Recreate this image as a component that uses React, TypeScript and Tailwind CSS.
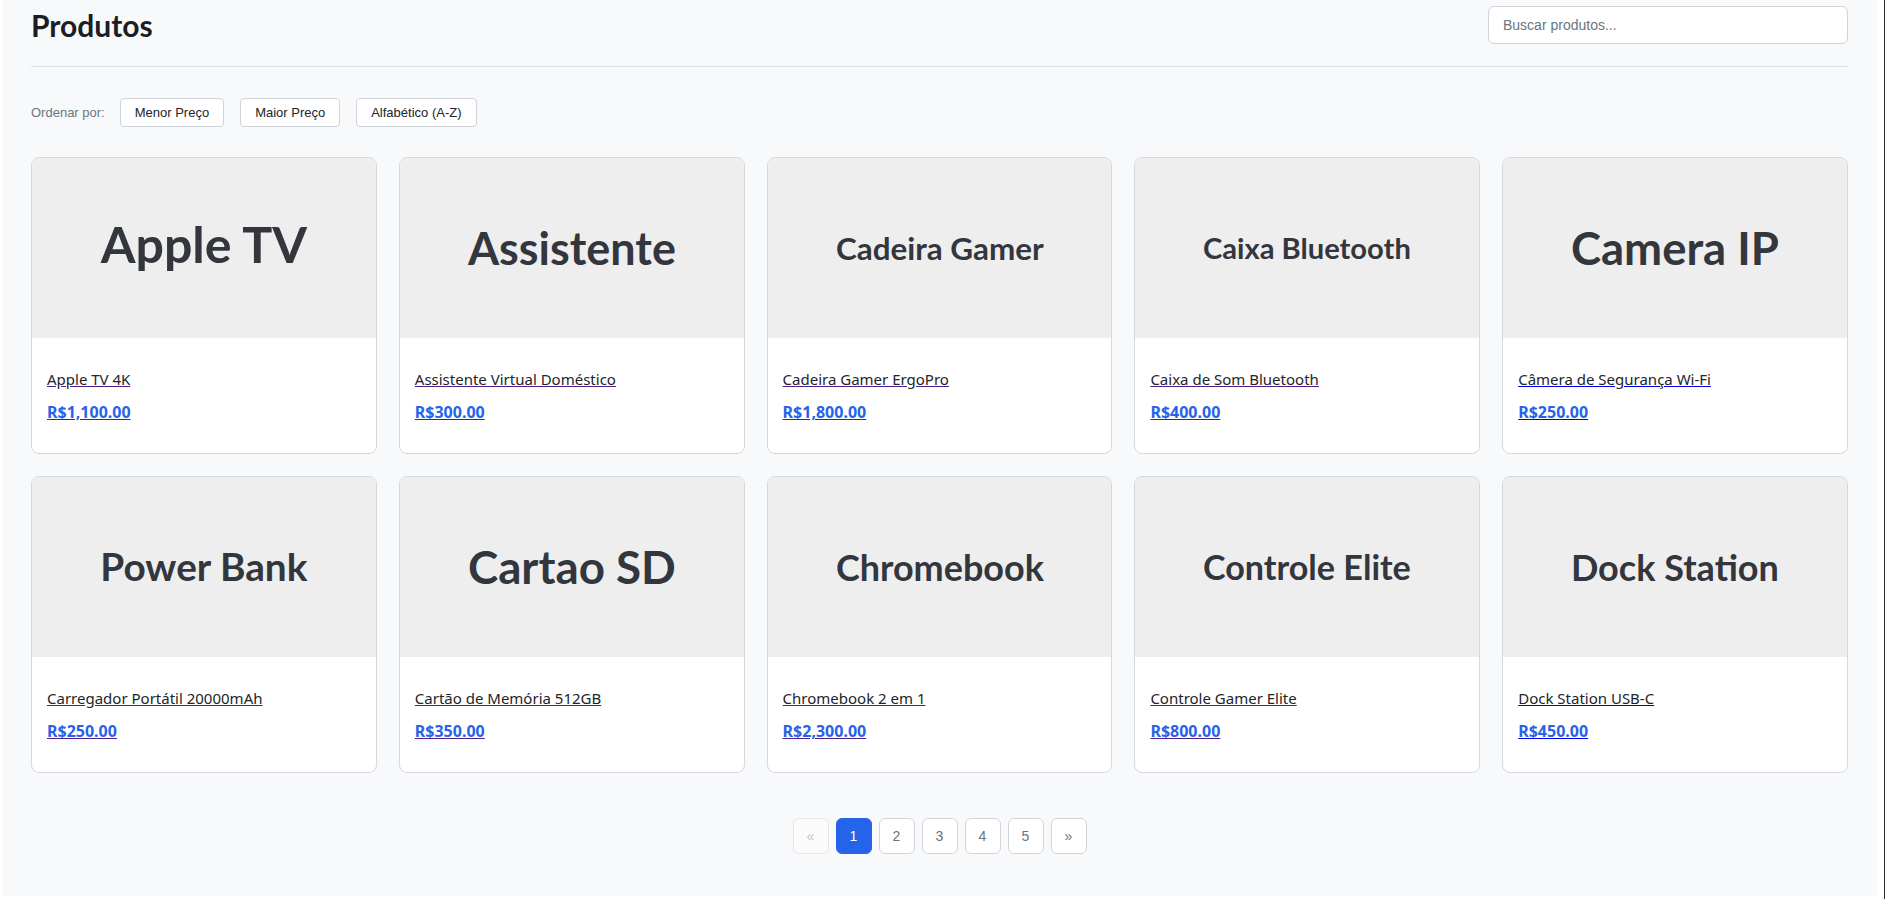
import React, { useLayoutEffect, useState } from "react";

type Produto = {
  label: string;
  nome: string;
  preco: string;
  visitado: boolean;
};

const produtos: Produto[] = [
  { label: "Apple TV", nome: "Apple TV 4K", preco: "R$1,100.00", visitado: true },
  { label: "Assistente", nome: "Assistente Virtual Doméstico", preco: "R$300.00", visitado: true },
  { label: "Cadeira Gamer", nome: "Cadeira Gamer ErgoPro", preco: "R$1,800.00", visitado: true },
  { label: "Caixa Bluetooth", nome: "Caixa de Som Bluetooth", preco: "R$400.00", visitado: true },
  { label: "Camera IP", nome: "Câmera de Segurança Wi-Fi", preco: "R$250.00", visitado: false },
  { label: "Power Bank", nome: "Carregador Portátil 20000mAh", preco: "R$250.00", visitado: true },
  { label: "Cartao SD", nome: "Cartão de Memória 512GB", preco: "R$350.00", visitado: true },
  { label: "Chromebook", nome: "Chromebook 2 em 1", preco: "R$2,300.00", visitado: true },
  { label: "Controle Elite", nome: "Controle Gamer Elite", preco: "R$800.00", visitado: true },
  { label: "Dock Station", nome: "Dock Station USB-C", preco: "R$450.00", visitado: false },
];

// imagem placeholder: texto ocupa ~208px e fica centrado pela caixa dos glifos
const Placeholder = ({ text }: { text: string }) => {
  const [m, setM] = useState({ size: 50, y: 108 });

  useLayoutEffect(() => {
    const medir = () => {
      const ctx = document.createElement("canvas").getContext("2d");
      if (!ctx) return;
      ctx.font = "700 50px Lato";
      const w = ctx.measureText(text).width;
      if (!w) return;
      const size = (50 * 208) / w;
      ctx.font = `700 ${size}px Lato`;
      const mm = ctx.measureText(text);
      const y = 90 + (mm.actualBoundingBoxAscent - mm.actualBoundingBoxDescent) / 2;
      setM({ size, y });
    };
    medir();
    document.fonts?.ready.then(medir);
  }, [text]);

  return (
    <svg width="100%" height="180" className="block bg-[#eeeeee]">
      <text
        x="50%"
        y={m.y}
        textAnchor="middle"
        fill="#33363d"
        fontFamily="Lato, sans-serif"
        fontWeight="700"
        fontSize={m.size}
      >
        {text}
      </text>
    </svg>
  );
};

const ProdutoCard = ({ p }: { p: Produto }) => {
  const deco = p.visitado ? "decoration-[#551a8b]" : "decoration-[#0000ee]";
  return (
    <a href="#" className="flex flex-col overflow-hidden rounded-[8px] border border-[#d5d8dc] bg-white">
      <Placeholder text={p.label} />
      <div className="px-[15px] pb-[29px] pt-[30px] [font-family:'Noto_Sans',sans-serif]">
        <div className={`text-[15px] leading-[22px] text-[#212529] underline ${deco}`}>
          <span>{p.nome}</span>
        </div>
        <div className={`mt-[10px] text-[16px] font-bold leading-6 text-[#2563eb] underline ${deco}`}>
          {p.preco}
        </div>
      </div>
    </a>
  );
};

const App = () => {
  const [busca, setBusca] = useState("");

  return (
    <div className="flex h-[899px] bg-white [font-family:'Liberation_Sans',Arial,sans-serif]">
      <div className="ml-[2px] h-[896px] w-[1875px] bg-[#f8f9fa] px-[29px]">
        <div className="flex items-center justify-between border-b border-[#dcdfe3] pb-[22px] pt-[6px]">
          <h1 className="text-[30px] font-bold leading-[34px] text-[#1b1e23] [font-family:Lato,sans-serif]">
            Produtos
          </h1>
          <input
            type="text"
            value={busca}
            onChange={(e) => setBusca(e.target.value)}
            placeholder="Buscar produtos..."
            className="h-[38px] w-[360px] rounded-[6px] border border-[#ced4da] bg-white px-[14px] text-[14px] text-[#212529] placeholder:text-[#6c757d] focus:outline-none"
          />
        </div>

        <div className="mt-[31px] flex items-center gap-[16px]">
          <span className="mr-[-1px] text-[13px] text-[#6c757d]">Ordenar por:</span>
          {["Menor Preço", "Maior Preço", "Alfabético (A-Z)"].map((label) => (
            <button
              key={label}
              className="h-[29px] rounded-[4px] border border-[#ced4da] bg-white px-[14px] text-[13px] text-[#212529]"
            >
              {label}
            </button>
          ))}
        </div>

        <div className="mt-[30px] grid grid-cols-5 gap-[22px]">
          {produtos.map((p) => (
            <ProdutoCard key={p.nome} p={p} />
          ))}
        </div>

        <div className="mt-[45px] flex justify-center gap-[7px]">
          <button
            disabled
            className="h-[36px] w-[36px] rounded-[6px] border border-[#e5e7eb] bg-[#fbfbfc] text-[14px] text-[#c4c7cc]"
          >
            «
          </button>
          {[1, 2, 3, 4, 5].map((n) =>
            n === 1 ? (
              <button
                key={n}
                className="h-[36px] w-[36px] rounded-[6px] border border-[#2563eb] bg-[#2563eb] text-[14px] text-white"
              >
                {n}
              </button>
            ) : (
              <button
                key={n}
                className="h-[36px] w-[36px] rounded-[6px] border border-[#d1d5db] bg-white text-[14px] text-[#6b7280]"
              >
                {n}
              </button>
            )
          )}
          <button className="h-[36px] w-[36px] rounded-[6px] border border-[#d1d5db] bg-white text-[14px] text-[#6b7280]">
            »
          </button>
        </div>
      </div>
      <div className="ml-auto w-px bg-[#2b2b2b]" />
    </div>
  );
};

export default App;
